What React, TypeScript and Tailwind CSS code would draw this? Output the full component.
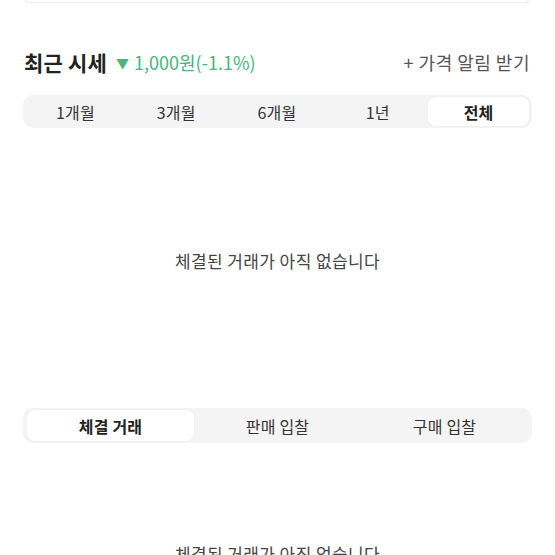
const font = { fontFamily: '"Noto Sans CJK KR", "Noto Sans", sans-serif' };

const periods = ["1개월", "3개월", "6개월", "1년", "전체"];
const tradeTabs = ["체결 거래", "판매 입찰", "구매 입찰"];

function Segmented({
  items,
  active,
  className,
}: {
  items: string[];
  active: number;
  className: string;
}) {
  return (
    <div className={`flex rounded-[10px] bg-[#f4f4f4] ${className}`}>
      {items.map((label, i) => (
        <div
          key={label}
          className={`flex flex-1 items-center justify-center rounded-[8px] text-[16px] tracking-[0.2px] ${
            i === active
              ? "bg-white font-bold text-[#222] shadow-[0_0_2px_rgba(0,0,0,0.06)]"
              : "text-[#333]"
          }`}
        >
          {label}
        </div>
      ))}
    </div>
  );
}

export default function App() {
  return (
    <div className="h-[555px] w-[555px] overflow-hidden bg-white" style={font}>
      <div className="mx-[26px] h-[3px] rounded-b-[8px] border-x border-b border-[#ececec]" />

      <div className="mt-[45px] flex h-[28px] items-center justify-between pl-[24px] pr-[25px]">
        <div className="flex items-center gap-[9px]">
          <span className="text-[21px] font-bold leading-none tracking-[0.2px] text-[#222]">
            최근 시세
          </span>
          <span className="flex items-center gap-[5px] text-[18px] leading-none text-[#41b979]">
            <span className="text-[13px]">▼</span>
            <span>1,000원(-1.1%)</span>
          </span>
        </div>
        <span className="text-[18px] leading-none tracking-[0.5px] text-[#555]">
          + 가격 알림 받기
        </span>
      </div>

      <Segmented
        items={periods}
        active={4}
        className="mx-[23px] mt-[19px] h-[33px] p-[2px] pr-[3px]"
      />

      <div className="flex h-[280px] justify-center pt-[122px] text-[17px] leading-[22px] tracking-[0.4px] text-[#444]">
        체결된 거래가 아직 없습니다
      </div>

      <Segmented
        items={tradeTabs}
        active={0}
        className="mx-[23px] h-[35px] px-[4px] py-[2px]"
      />

      <div className="flex justify-center pt-[100px] text-[17px] leading-[22px] tracking-[0.4px] text-[#444]">
        체결된 거래가 아직 없습니다
      </div>
    </div>
  );
}
